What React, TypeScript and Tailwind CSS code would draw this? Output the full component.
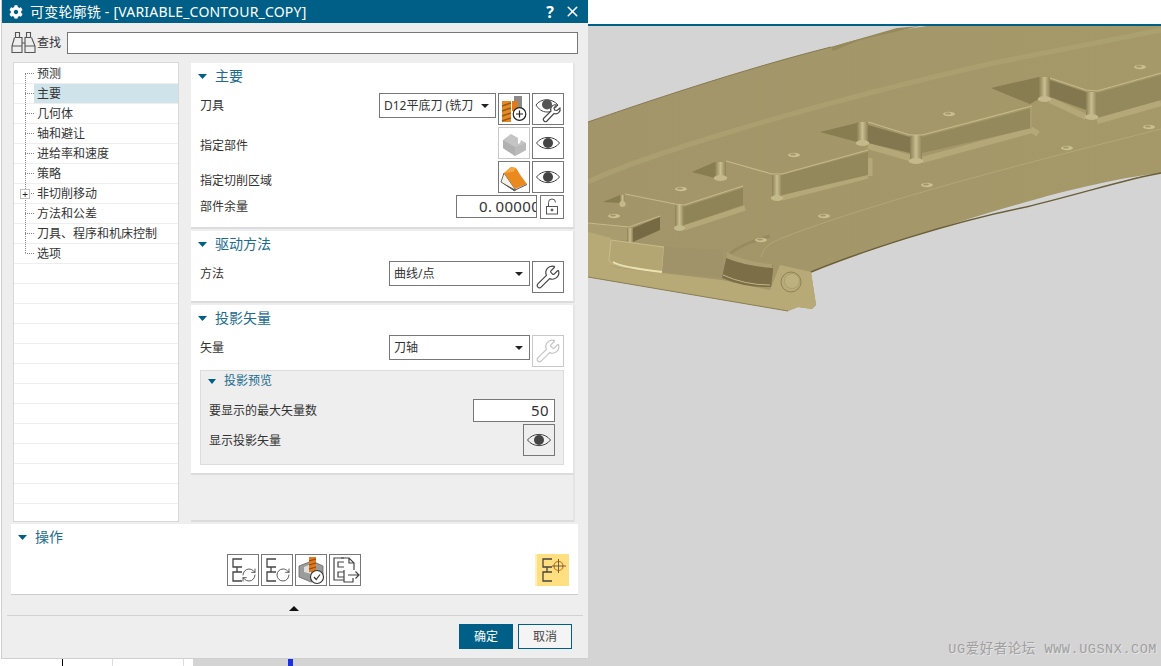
import React from "react";
import { FaCog } from "react-icons/fa";
import { X, Wrench, RefreshCw, RotateCw } from "lucide-react";

const cjk = 'font-["Noto_Sans","Noto_Sans_CJK_SC",sans-serif]';

function Tri({ small = false }: { small?: boolean }) {
  return small ? (
    <svg width="8" height="5" viewBox="0 0 8 5" className="shrink-0"><path d="M0 0H8L4 5Z" fill="#005f86" /></svg>
  ) : (
    <svg width="9" height="5" viewBox="0 0 9 5" className="shrink-0"><path d="M0 0H9L4.5 5Z" fill="#005f86" /></svg>
  );
}

function Btn({ children, disabled = false }: { children?: React.ReactNode; disabled?: boolean }) {
  return (
    <div className={`w-[32px] h-[32px] shrink-0 bg-white border flex items-center justify-center ${disabled ? "border-[#c8c8c8]" : "border-[#777777]"}`}>
      {children}
    </div>
  );
}

function Eye() {
  return (
    <svg width="30" height="30" viewBox="0 0 30 30">
      <path d="M3.5 15C9 7.5 21 7.5 26.5 15C21 22.5 9 22.5 3.5 15Z" fill="none" stroke="#444" strokeWidth="1" />
      <circle cx="15" cy="15" r="5" fill="#444" />
    </svg>
  );
}

function EyeWrench() {
  return (
    <svg width="30" height="30" viewBox="0 0 30 30">
      <path d="M3 11C8 4 19 4 25 11C20 17 17 18 14 18C9 18 5.5 15 3 11Z" fill="none" stroke="#444" strokeWidth="1" />
      <circle cx="14" cy="10.500" r="5" fill="#555" />
      <path d="M27 14l-3 2.500-2.500-.5-.5-2 2.500-3a4.500 4.500 0 0 0-5.500 6L11 24a2 2 0 0 0 3 3l7-7.500a4.500 4.500 0 0 0 6-5.500Z" fill="#fff" stroke="#444" strokeWidth="1.100" />
    </svg>
  );
}

function ToolIcon() {
  return (
    <svg width="30" height="30" viewBox="0 0 30 30">
      <rect x="15" y="2" width="8" height="14" fill="#8a8a8a" />
      <rect x="13" y="7" width="6" height="10" fill="#e07a1f" />
      <rect x="3" y="7" width="9" height="21" fill="#e8891f" />
      <path d="M3 12l9-3M3 17l9-3M3 22l9-3M3 27l9-3" stroke="#8c5a22" strokeWidth="1.500" />
      <circle cx="20.500" cy="20" r="6.300" fill="#fff" stroke="#222" strokeWidth="1.200" />
      <path d="M20.500 16.500v7M17 20h7" stroke="#222" strokeWidth="1.200" />
    </svg>
  );
}

function PartIcon() {
  return (
    <svg width="30" height="30" viewBox="0 0 30 30">
      <path d="M4 12L12 6L19 10V16L21 15L22 12L27 15V22L16 28L4 20Z" fill="#c4c4c4" />
      <path d="M4 12L16 19V28L4 20Z" fill="#b0b0b0" />
      <path d="M16 19L27 15V22L16 28Z" fill="#bababa" />
    </svg>
  );
}

function CutIcon() {
  return (
    <svg width="30" height="30" viewBox="0 0 30 30">
      <path d="M2 20L5 11L16 27V29Z" fill="#f6f2ea" stroke="#444" strokeWidth="0.800" />
      <path d="M5 11L12 5L17 6L22 14L28 22L16 27Z" fill="#ea8a1e" />
      <path d="M5 11L12 5L17 6L14 10Z" fill="#f6a640" />
      <path d="M2 20L15 29L28 23V22L16 27.500Z" fill="#555" />
    </svg>
  );
}

function LockOpen() {
  return (
    <svg width="18" height="18" viewBox="0 0 18 18" fill="none" stroke="#555" strokeWidth="1">
      <rect x="3.500" y="8.500" width="11" height="7.500" />
      <path d="M5.500 8.500V4.500a3.500 3.500 0 0 1 7 0" />
      <circle cx="9" cy="12" r="1" fill="#555" />
    </svg>
  );
}

const Bracket = ({ color = "#444" }: { color?: string }) => (
  <path d="M14 4H5V12H14M9 12V17M14 17H5V26H14" fill="none" stroke={color} strokeWidth="1.300" />
);

function Op1() {
  return (
    <svg width="30" height="30" viewBox="0 0 30 30">
      <Bracket />
      <RefreshCw x={13} y={12} width={16} height={16} color="#444" strokeWidth={1.300} />
    </svg>
  );
}
function Op2() {
  return (
    <svg width="30" height="30" viewBox="0 0 30 30">
      <Bracket />
      <RotateCw x={13} y={12} width={16} height={16} color="#444" strokeWidth={1.300} />
    </svg>
  );
}
function Op3() {
  return (
    <svg width="30" height="30" viewBox="0 0 30 30">
      <path d="M3 11L16 6L27 11V22L15 27L3 22Z" fill="#9b9b9b" stroke="#666" strokeWidth="0.800" />
      <path d="M8 12L15 9V19L8 17Z" fill="#dedede" />
      <rect x="13" y="2" width="7" height="15" fill="#e07a1f" />
      <path d="M13 6l7-2M13 10l7-2M13 14l7-2" stroke="#8a4a10" strokeWidth="1.200" />
      <circle cx="21" cy="22" r="6.500" fill="#fff" stroke="#333" strokeWidth="1.100" />
      <path d="M18 22l2.200 2.500 3.800-5" fill="none" stroke="#333" strokeWidth="1.200" />
    </svg>
  );
}
function Op4() {
  return (
    <svg width="30" height="30" viewBox="0 0 30 30" fill="none" stroke="#444" strokeWidth="1.200">
      <path d="M14 3H4V25H14" />
      <path d="M14 7H8V12H14M14 17H8V22H14" />
      <path d="M11 3H19L24 8V15M19 3V8H24" />
      <path d="M14 15V27H23V23" />
      <path d="M18 20H29M25.500 16.500L29 20L25.500 23.500" />
    </svg>
  );
}
function OpCross() {
  return (
    <svg width="30" height="30" viewBox="0 0 30 30">
      <Bracket />
      <circle cx="20.500" cy="11" r="4.500" fill="none" stroke="#d96f10" strokeWidth="1.200" />
      <path d="M14 11H28M20.500 4V18" stroke="#555" strokeWidth="0.900" />
    </svg>
  );
}

function Select({ w, label }: { w: string; label: string }) {
  return (
    <div className={`${w} h-[25px] shrink-0 bg-white border border-[#777777] flex items-center pl-[4px] pr-[6px] gap-[4px] overflow-hidden`}>
      <span className="flex-1 overflow-hidden whitespace-nowrap text-[12px] text-[#333]">{label}</span>
      <svg width="8" height="4" viewBox="0 0 8 4" className="shrink-0"><path d="M0 0H8L4 4Z" fill="#222" /></svg>
    </div>
  );
}

function Head({ title }: { title: string }) {
  return (
    <div className="h-[26px] flex items-center pl-[7px] gap-[8px]">
      <Tri />
      <span className="text-[14px] text-[#1b6c8e] leading-none">{title}</span>
    </div>
  );
}

const treeLabels = ["预测", "主要", "几何体", "轴和避让", "进给率和速度", "策略", "非切削移动", "方法和公差", "刀具、程序和机床控制", "选项"];

function Tree() {
  const empty = Array.from({ length: 12 });
  return (
    <div className="w-[166px] h-[460px] shrink-0 bg-white border border-[#d8d8d8] pt-[1px] overflow-hidden">
      {treeLabels.map((t, i) => (
        <div key={t} className="h-[20px] flex border-b border-[#eeeeee]">
          <div className="relative ml-[11px] w-[9px] shrink-0 h-full flex flex-col">
            <div className={`h-[10px] border-l border-dotted ${i === 0 ? "border-transparent" : "border-[#888]"}`} />
            <div className={`h-[10px] border-t border-dotted border-t-[#888] border-l ${i === treeLabels.length - 1 ? "border-l-transparent" : "border-l-[#888]"}`} />
            {i === 6 && (
              <div className="absolute left-[-5px] top-[5px] w-[10px] h-[10px] bg-white border border-[#c0c0c0] flex items-center justify-center text-[10px] leading-none text-[#222]">+</div>
            )}
          </div>
          <div className={`flex-1 flex items-center pl-[3px] text-[12px] text-[#333] whitespace-nowrap ${i === 1 ? "bg-[#cfe4ea]" : ""}`}>{t}</div>
        </div>
      ))}
      {empty.map((_, i) => (
        <div key={i} className="h-[20px] border-b border-[#eeeeee]" />
      ))}
    </div>
  );
}

function Panels() {
  return (
    <div className="w-[384px] h-[460px] shrink-0 pt-[1px] flex flex-col gap-[2px] text-[12px] text-[#333]">
      <section className="bg-white border-b-2 border-[#dcdcdc] border-r-2 border-r-[#e4e4e4]">
        <Head title="主要" />
        <div className="pt-[4px] pb-[8px] pl-[9px] pr-[9px] flex flex-col gap-[2px]">
          <div className="h-[32px] flex items-start justify-between">
            <span className="h-[24px] pt-[1px] flex items-center">刀具</span>
            <div className="flex gap-[2px] items-start">
              <Select w="w-[117px]" label="D12平底刀 (铣刀" />
              <Btn><ToolIcon /></Btn>
              <Btn><EyeWrench /></Btn>
            </div>
          </div>
          <div className="h-[32px] flex items-center justify-between">
            <span className="pt-[5px]">指定部件</span>
            <div className="flex gap-[2px]">
              <Btn disabled><PartIcon /></Btn>
              <Btn><Eye /></Btn>
            </div>
          </div>
          <div className="h-[32px] flex items-center justify-between">
            <span className="pt-[7px]">指定切削区域</span>
            <div className="flex gap-[2px]">
              <Btn><CutIcon /></Btn>
              <Btn><Eye /></Btn>
            </div>
          </div>
          <div className="h-[24px] flex items-center justify-between">
            <span>部件余量</span>
            <div className="flex gap-[3px]">
              <div className="w-[81px] h-[23px] bg-white border border-[#777777] overflow-hidden whitespace-nowrap pl-[22px] text-[15px] leading-[21px] tracking-[0.4px] text-[#333]">
                <span className="mr-[3px]">0.</span>00000
              </div>
              <div className="w-[24px] h-[24px] bg-white border border-[#777777] flex items-center justify-center"><LockOpen /></div>
            </div>
          </div>
        </div>
      </section>

      <section className="bg-white border-b-2 border-[#dcdcdc] border-r-2 border-r-[#e4e4e4]">
        <Head title="驱动方法" />
        <div className="pt-[4px] pb-[8px] pl-[9px] pr-[9px] flex items-start justify-between">
          <span className="h-[25px] pt-[1px] flex items-center">方法</span>
          <div className="flex gap-[2px] items-start">
            <Select w="w-[141px]" label="曲线/点" />
            <Btn><Wrench size={26} strokeWidth={1.100} color="#444" /></Btn>
          </div>
        </div>
      </section>

      <section className="bg-white border-b-2 border-[#dcdcdc] border-r-2 border-r-[#e4e4e4]">
        <Head title="投影矢量" />
        <div className="pt-[4px] pl-[9px] pr-[9px] flex items-start justify-between">
          <span className="h-[25px] pt-[1px] flex items-center">矢量</span>
          <div className="flex gap-[2px] items-start">
            <Select w="w-[141px]" label="刀轴" />
            <Btn disabled><Wrench size={26} strokeWidth={1.100} color="#c4c4c4" /></Btn>
          </div>
        </div>
        <div className="mt-[3px] mb-[8px] mx-[9px] bg-[#eeeeee] border border-[#dcdcdc]">
          <div className="h-[21px] flex items-center pl-[7px] gap-[8px]">
            <Tri small />
            <span className="text-[12px] text-[#1b6c8e] -mt-[1px]">投影预览</span>
          </div>
          <div className="pt-[7px] pb-[8px] pl-[8px] pr-[8px] flex flex-col gap-[3px]">
            <div className="h-[22px] flex items-center justify-between">
              <span className="pt-[1px]">要显示的最大矢量数</span>
              <div className="w-[82px] h-[23px] bg-white border border-[#777777] text-right pr-[5px] text-[15px] leading-[21px] tracking-[0.4px] text-[#333]">50</div>
            </div>
            <div className="h-[32px] flex items-center justify-between">
              <span className="pt-[1px]">显示投影矢量</span>
              <div className="w-[32px] h-[32px] bg-[#eeeeee] border border-[#777777] flex items-center justify-center"><Eye /></div>
            </div>
          </div>
        </div>
      </section>

      <div className="flex-1 -mt-[2px] border-b-2 border-[#dcdcdc] border-r-2 border-r-[#e4e4e4]" />
    </div>
  );
}

function Dialog() {
  return (
    <div className={`h-[659px] ml-[1px] flex flex-col bg-[#eeeeee] border-l border-b border-[#cfcfcf] ${cjk}`}>
      <div className="h-[23px] shrink-0 bg-[#005f86] flex items-center text-white pl-[7px]">
        <FaCog size={14} />
        <span className="ml-[7px] text-[14px] whitespace-nowrap tracking-[0.2px]">可变轮廓铣 - [VARIABLE_CONTOUR_COPY]</span>
        <span className="ml-auto text-[16px] font-bold leading-none">?</span>
        <X size={17} strokeWidth={2.200} className="ml-[10px] mr-[7px]" />
      </div>

      <div className="h-[39px] shrink-0 flex items-center pl-[9px] pr-[10px]">
        <svg width="25" height="23" viewBox="0 0 25 23" fill="none" stroke="#555" strokeWidth="1.100" className="shrink-0">
          <path d="M4.500 1.500h4v5h-4zM15.500 1.500h4v5h-4zM3.500 6.500L1 15v6.500h10V6.500H8.500M20.500 6.500L24 15v6.500H14V6.500h1.500M11 12h3M1 15h10M14 15h10" />
        </svg>
        <span className="ml-[1px] text-[12px] text-[#333] whitespace-nowrap">查找</span>
        <div className="ml-[6px] flex-1 h-[22px] bg-white border border-[#777777]" />
      </div>

      <div className="h-[460px] shrink-0 flex pl-[11px] gap-[12px]">
        <Tree />
        <Panels />
      </div>

      <div className="mt-[2px] ml-[9px] w-[567px] h-[71px] shrink-0 bg-white border-b border-[#cccccc]">
        <div className="h-[26px] flex items-center pl-[7px] gap-[8px]">
          <Tri />
          <span className="text-[14px] text-[#1b6c8e] -mt-[2px]">操作</span>
        </div>
        <div className="mt-[4px] flex pl-[216px] pr-[9px] gap-[2px]">
          <Btn><Op1 /></Btn>
          <Btn><Op2 /></Btn>
          <Btn><Op3 /></Btn>
          <Btn><Op4 /></Btn>
          <div className="ml-auto w-[34px] h-[32px] bg-[#ffdf80] border-l-2 border-[#fff0c4] flex items-center justify-center"><OpCross /></div>
        </div>
      </div>

      <div className="h-[20px] shrink-0 flex items-center justify-center pt-[6px] pr-[2px]">
        <svg width="10" height="5" viewBox="0 0 10 5"><path d="M0 5H10L5 0Z" fill="#111" /></svg>
      </div>
      <div className="mx-[5px] border-t border-[#d2d2d2]" />
      <div className="flex-1 flex justify-end items-start pt-[8px] pr-[16px] gap-[5px] text-[12px]">
        <div className="w-[54px] h-[25px] bg-[#005f86] text-white flex items-center justify-center">确定</div>
        <div className="w-[54px] h-[25px] bg-[#f4f4f4] border border-[#005f86] text-[#444] flex items-center justify-center">取消</div>
      </div>
    </div>
  );
}

function BottomStrip() {
  return (
    <div className="h-[7px] flex">
      <div className="w-[63px] bg-white border-r border-black" />
      <div className="w-[50px] bg-white border-r border-[#dddddd]" />
      <div className="w-[71px] bg-white border-r border-[#dddddd]" />
      <div className="w-[9px] bg-white" />
      <div className="flex-1 bg-[#d4d4d4] pl-[95px]">
        <div className="w-[5px] h-[7px] bg-[#1a2fe0]" />
      </div>
    </div>
  );
}

function Model() {
  const holes: [number, number][] = [[1140, 67], [949, 114], [794, 155], [681, 189], [614, 216], [1067, 148], [927, 185], [824, 216], [761, 240], [1149, 127]];
  const Corner = ({ x, y, w, h }: { x: number; y: number; w: number; h: number }) => (
    <>
      <rect x={x} y={y} width={w} height={h} fill="url(#c)" />
      <ellipse cx={x + w / 2} cy={y + h} rx={w * 0.62} ry="3" fill="#c4b98a" />
    </>
  );
  return (
    <svg viewBox="588 26 573 640" className="block w-full h-full">
      <defs>
        <linearGradient id="b" x1="0" y1="0" x2="1" y2="0">
          <stop offset="0" stopColor="#a2956a" />
          <stop offset="1" stopColor="#a59969" />
        </linearGradient>
        <linearGradient id="c" x1="0" y1="0" x2="1" y2="0">
          <stop offset="0" stopColor="#8c8056" />
          <stop offset="0.5" stopColor="#c8be90" />
          <stop offset="1" stopColor="#8f8358" />
        </linearGradient>
        <filter id="s" x="-5%" y="-5%" width="110%" height="110%">
          <feGaussianBlur stdDeviation="0.45" />
        </filter>
      </defs>
      <g filter="url(#s)">
        {/* body */}
        <path d="M588 122C640 104 740 70 831 47C860 38 895 30 927 26H1161V173C1100 180 1026 200 908 238C870 250 835 262 811 272L816 305L812 309L798 307L788 311L588 277Z" fill="url(#b)" />
        <path d="M831 47L897 28L920 26L860 40L833 51Z" fill="#96895c" />
        <path d="M588 122C640 104 740 70 831 47" fill="none" stroke="#85784e" strokeWidth="1" />
        <path d="M811 272C860 252 950 222 1026 207C1080 194 1130 178 1161 173" fill="none" stroke="#6b5f38" strokeWidth="1.500" />
        {/* ridge */}
        <path d="M588 182C640 157 800 107 989 64C1060 50 1120 38 1161 30" fill="none" stroke="#ada172" strokeWidth="5" opacity="0.8" />
        <path d="M761 257C764 246 772 242 782 238C880 200 1030 162 1161 129" fill="none" stroke="#b5aa7c" strokeWidth="1" opacity="0.8" />
        <path d="M728 256C738 246 750 242 770 236" fill="none" stroke="#8f8358" strokeWidth="3" opacity="0.6" />

        {/* step A */}
        <path d="M1097 121L1161 103M1050 100L1086 117" fill="none" stroke="#b4a879" strokeWidth="6" />
        <path d="M991 88L1039 77V99L1030 104Z" fill="#887b51" />
        <path d="M1050 80L1086 92V110L1050 97Z" fill="#837750" />
        <Corner x={1039} y={77} w={11} h={22} />
        <path d="M1097 93L1161 75V100L1097 118Z" fill="#94885d" />
        <Corner x={1086} y={92} w={11} h={25} />
        <path d="M1050 78L1086 90L1097 91L1161 73" fill="none" stroke="#c5ba8a" strokeWidth="1.200" />

        {/* step B */}
        <path d="M922 160L1032 130L1038 134M868 146L910 158" fill="none" stroke="#b4a879" strokeWidth="6" />
        <path d="M820 132L857 123V142Z" fill="#887b51" />
        <path d="M868 125L910 137V153L868 143Z" fill="#837750" />
        <Corner x={857} y={122} w={11} h={21} />
        <path d="M922 137L1032 108V128L922 153Z" fill="#94885d" />
        <Corner x={910} y={135} w={12} h={26} />
        <path d="M868 122L910 135L922 135L1032 106" fill="none" stroke="#c5ba8a" strokeWidth="1.200" />
        <path d="M1031 108V128" fill="none" stroke="#c0b585" strokeWidth="1" />

        {/* step C */}
        <path d="M782 198L868 176M870 158V176" fill="none" stroke="#b4a879" strokeWidth="5" />
        <path d="M692 172L715 162V178Z" fill="#887b51" />
        <Corner x={715} y={162} w={11} h={16} />
        <path d="M782 175L868 152V175L782 195Z" fill="#93875c" />
        <Corner x={772} y={175} w={10} h={23} />
        <path d="M726 161L772 174L782 174L868 150" fill="none" stroke="#c5ba8a" strokeWidth="1.200" />

        {/* step D */}
        <path d="M684 228L745 208" fill="none" stroke="#b4a879" strokeWidth="5" />
        <path d="M603 202L620 195V203Z" fill="#887b51" />
        <Corner x={620} y={195} w={5} h={9} />
        <path d="M684 207L743 188V205L684 225Z" fill="#8f8358" />
        <Corner x={675} y={205} w={9} h={23} />
        <path d="M625 194L675 204L684 205L743 186" fill="none" stroke="#c5ba8a" strokeWidth="1.200" />

        {/* step E */}
        <path d="M588 223L629 228V240H588Z" fill="#a99d6f" />
        <path d="M588 223L629 227L660 216" fill="none" stroke="#c5ba8a" strokeWidth="1" />
        <path d="M633 228L660 217V230L633 242Z" fill="#766a44" />
        <rect x="627" y="228" width="6" height="14" fill="url(#c)" />

        {/* front lip */}
        <path d="M588 232L611 238L609 260Q612 268 622 268L662 273L722 280L770 290L780 265L811 272L816 305L812 309L798 307L788 311L588 277Z" fill="#b7aa77" />
        <path d="M611 240L664 247L662 272L622 267Q610 265 609 260Z" fill="#b3a673" stroke="#cfc493" strokeWidth="0.800" />
        <path d="M613 262Q620 267 662 272" fill="none" stroke="#ebe2b4" strokeWidth="2" />
        <path d="M664 247L722 250L725 278L662 272Z" fill="#a0936a" />

        {/* pocket */}
        <path d="M727 254Q748 266 773 265V271L771 287Q745 288 722 278Z" fill="#7b6e47" />
        <path d="M727 252Q745 262 772 264L773 268Q745 266 726 258Z" fill="#ac9f72" />
        <path d="M723 275Q745 285 770 285" fill="none" stroke="#c0b585" strokeWidth="1" />
        <circle cx="791" cy="282" r="10" fill="#b8ab78" stroke="#8f8358" strokeWidth="1" />
        <circle cx="792" cy="281" r="7.500" fill="#bdb17f" stroke="#a79a6b" strokeWidth="0.800" />
        <path d="M588 277L788 311" fill="none" stroke="#8c7f54" strokeWidth="1" />
        {holes.map(([cx, cy]) => (
          <g key={cx}>
            <ellipse cx={cx} cy={cy} rx="6" ry="2.200" fill="#c9bf90" />
            <ellipse cx={cx - 1} cy={cy - 0.5} rx="3" ry="0.900" fill="#a39668" />
          </g>
        ))}
      </g>
    </svg>
  );
}

export default function App() {
  return (
    <div className="w-[1161px] h-[666px] flex overflow-hidden bg-white">
      <div className="w-[588px] shrink-0 flex flex-col">
        <Dialog />
        <BottomStrip />
      </div>
      <div className="flex-1 flex flex-col">
        <div className="h-[24px] bg-white shrink-0" />
        <div className="h-[2px] bg-[#005f86] shrink-0" />
        <div className="relative flex-1 bg-[#d4d4d4] overflow-hidden">
          <Model />
          <div className="absolute right-[4px] bottom-[6px] text-[13.5px] tracking-[0.55px] whitespace-nowrap text-[#a0a0a0] font-['Liberation_Mono','Noto_Sans_CJK_SC',monospace] [text-shadow:1px_1px_0_#e4e4e4]">
            UG爱好者论坛 WWW.UGSNX.COM
          </div>
        </div>
      </div>
    </div>
  );
}
